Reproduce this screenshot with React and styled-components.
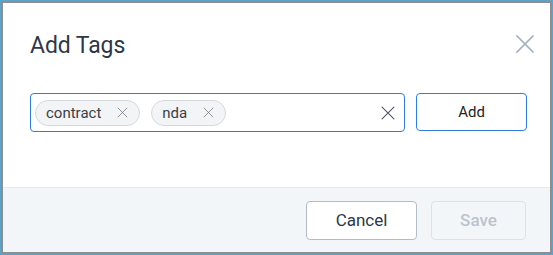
import React from "react";
import styled, { createGlobalStyle } from "styled-components";

const Global = createGlobalStyle`
  html, body { margin: 0; padding: 0; background: #fff; }
  body { font-family: Roboto, "Noto Sans", sans-serif; }
  * { box-sizing: border-box; }
`;

const Frame = styled.div`
  width: 553px;
  height: 255px;
  border: 1px solid #5fa3c9;
  display: flex;
`;

const Dialog = styled.div`
  flex: 1;
  border: 2px solid #8e8e8e;
  display: flex;
  flex-direction: column;
  background: #fff;
`;

const Header = styled.div`
  display: flex;
  align-items: center;
  justify-content: space-between;
  padding: 26px 16px 0 27px;
  height: 58px;
`;

const Title = styled.h2`
  margin: 0;
  font-size: 23px;
  font-weight: 400;
  color: #2d3748;
  letter-spacing: -0.1px;
`;

const CloseButton = styled.button`
  border: 0;
  background: none;
  padding: 0;
  margin-top: -3px;
  width: 18px;
  height: 18px;
  display: flex;
  align-items: center;
  justify-content: center;
  cursor: pointer;
`;

const Body = styled.div`
  flex: 1;
  display: flex;
  gap: 11px;
  padding: 32px 23px 0 27px;
  align-items: flex-start;
`;

const TagInput = styled.div`
  width: 375px;
  height: 39px;
  border: 1px solid #2f7de1;
  border-radius: 4px;
  display: flex;
  align-items: center;
  padding: 0 9px 0 4px;
  gap: 11px;
`;

const Chip = styled.span`
  display: inline-flex;
  align-items: center;
  height: 26px;
  padding: 0 11px 0 10px;
  gap: 16px;
  border: 1px solid #d5d9de;
  border-radius: 13px;
  background: #f3f4f6;
  font-size: 15px;
  color: #3a3f47;
`;

const Spacer = styled.div`
  flex: 1;
`;

const IconButton = styled.span`
  display: inline-flex;
  align-items: center;
`;

const AddButton = styled.button`
  width: 111px;
  height: 38px;
  border: 1px solid #2f7de1;
  border-radius: 4px;
  background: #fff;
  font-family: inherit;
  font-size: 15px;
  color: #1f2329;
`;

const Footer = styled.div`
  height: 65px;
  background: #f3f6f9;
  border-top: 1px solid #e7ebef;
  display: flex;
  justify-content: flex-end;
  align-items: center;
  gap: 14px;
  padding: 0 24px 0 0;
`;

const FooterButton = styled.button`
  height: 39px;
  width: ${(p) => p.$w}px;
  border-radius: 4px;
  font-family: inherit;
  font-size: 17px;
  border: 1px solid ${(p) => (p.disabled ? "#dde2e8" : "#b3bcc6")};
  background: ${(p) => (p.disabled ? "#f3f6f9" : "#fff")};
  color: ${(p) => (p.disabled ? "#bcc3cc" : "#2d3748")};
  font-weight: ${(p) => (p.disabled ? 500 : 400)};
`;

const X = ({ size, color, stroke = 1.3, inset = 2 }) => (
  <svg width={size} height={size} viewBox="0 0 16 16" fill="none">
    <path
      d={`M${inset} ${inset} L${16 - inset} ${16 - inset} M${16 - inset} ${inset} L${inset} ${16 - inset}`}
      stroke={color}
      strokeWidth={stroke}
      strokeLinecap="round"
    />
  </svg>
);

export default function App() {
  return (
    <>
      <Global />
      <Frame>
        <Dialog>
          <Header>
            <Title>Add Tags</Title>
            <CloseButton aria-label="Close">
              <X size={18} color="#a6b2c2" stroke={1.4} inset={0.8} />
            </CloseButton>
          </Header>
          <Body>
            <TagInput>
              <Chip>
                contract
                <IconButton><X size={11} color="#6b7280" stroke={1.1} inset={1.5} /></IconButton>
              </Chip>
              <Chip>
                nda
                <IconButton><X size={11} color="#6b7280" stroke={1.1} inset={1.5} /></IconButton>
              </Chip>
              <Spacer />
              <IconButton><X size={14} color="#4b5563" stroke={1.2} inset={1.2} /></IconButton>
            </TagInput>
            <AddButton>Add</AddButton>
          </Body>
          <Footer>
            <FooterButton $w={111}>Cancel</FooterButton>
            <FooterButton $w={95} disabled>Save</FooterButton>
          </Footer>
        </Dialog>
      </Frame>
    </>
  );
}
